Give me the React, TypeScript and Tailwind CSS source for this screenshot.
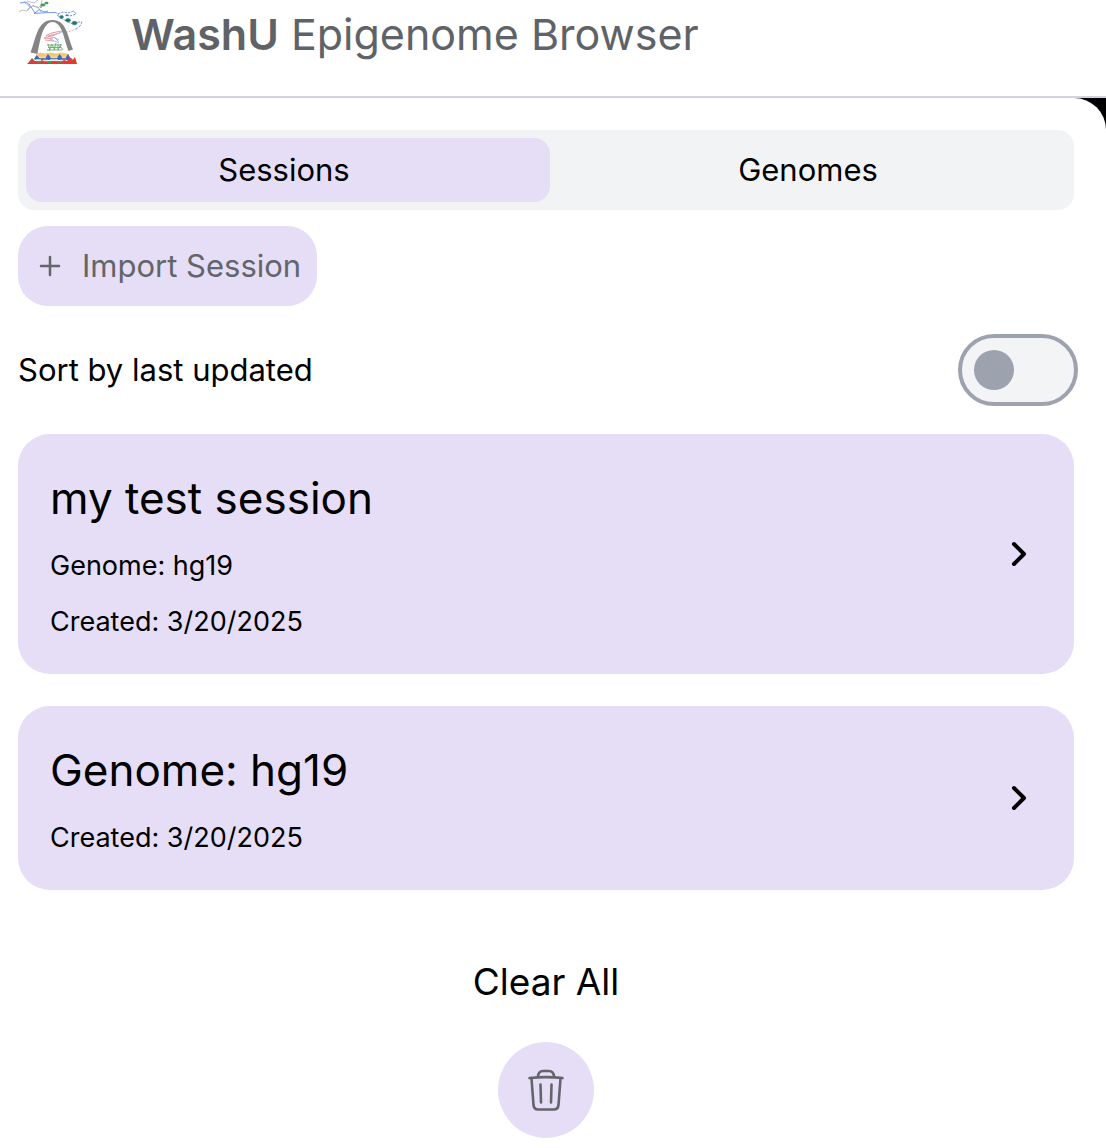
import { useState } from "react";

type Session = { title: string; details: string[] };

const sessions: Session[] = [
  { title: "my test session", details: ["Genome: hg19", "Created: 3/20/2025"] },
  { title: "Genome: hg19", details: ["Created: 3/20/2025"] },
];

const tabs = [
  { name: "Sessions", active: "-mr-2 bg-[#e5def6] pr-2" },
  { name: "Genomes", active: "-ml-2 bg-[#e5def6] pl-2" },
];

function Logo() {
  return (
    <svg className="h-16 w-16 shrink-0" viewBox="19 0 64 64" fill="none" aria-hidden="true">
      <g stroke="#a9afb6" strokeWidth="0.8">
        <path d="M19 12l3-2 5 1 5-5 6 1 3 5M24 2l6 5-3 3M27 1l7 2 4-3M32 5l6 3 3-3 1-5" />
      </g>
      <g stroke="#6f98ee" strokeWidth="1">
        <path d="M20 3l6-1 4 3M29 4l6 9 5-4M40 10l4 2 4-1M34 13.500q10-1 21-1" />
        <path d="M55 12l4 3M58 14l5-2 5 1 6-2 2 3-6 2-5-1" strokeDasharray="2.500 1" />
        <path d="M57 15l4 3 7 4 7 3 3-3 4 0-2 4-5 4" strokeDasharray="3 1" />
      </g>
      <g fill="#4b9c57">
        <ellipse cx="43" cy="5" rx="2.6" ry="1.4" />
        <ellipse cx="46.500" cy="3" rx="2" ry="1.2" />
        <ellipse cx="41" cy="7" rx="1.2" ry="0.800" />
      </g>
      <g fill="#217a48" stroke="#4781b0" strokeWidth="0.6">
        <ellipse cx="61.500" cy="17" rx="2" ry="1.400" />
        <ellipse cx="67" cy="15.300" rx="1.200" ry="0.600" />
        <ellipse cx="68" cy="20.200" rx="2.500" ry="1.800" />
        <ellipse cx="74.500" cy="23" rx="2.600" ry="1.800" />
      </g>
      <path d="M76 28.500q-4 3-12 4" stroke="#e9a0b4" strokeWidth="0.900" strokeDasharray="2 1" />
      <path d="M63 31q-12 1-17 5M60 33l-12 3M55 35l-11 3 9 1M45 40l9 1" stroke="#f09ba3" strokeWidth="1.200" />
      <path d="M62 32q-5 2-9 3M50 37q6 0 9 3M50 39l9 4M54 37l5 5" stroke="#a9b9f2" strokeWidth="1" />
      <path d="M30.500 52.500C36 39 37 20 52.500 20C66 20 67 34 73 49.500L68.500 51C63.500 37 62 22.500 52.500 22C43 22.500 40.500 38 37.500 54Z" fill="#858585" />
      <path d="M47 45h15M48 47.500h13M47 50h15M48 44l2 6M52 44l-3 7M52 45l3 5M56 43l-2 7M58 44v6M61 44l-3 6M60 46l3 4" stroke="#66ad66" strokeWidth="0.900" />
      <path d="M36 54l4-1.500 5 1 5-1 6 1 5-1 8 1.500-1 3H38z" fill="#f2c877" />
      <path d="M34 59l2.500-4 3 3h6l2.500-4 3 4h6l2.500-4 3 4h3l2.500-4 3 5-3 1H36z" fill="#3b66c4" />
      <path d="M40 57.500h6M51 57.500h6M62 57.500h4" stroke="#f5d798" strokeWidth="1.500" />
      <path d="M29 62l3-4 3 3h33l4-3 2 5-5 1H30z" fill="#469b49" />
      <path d="M36 60h5M43 60.500h5M50 60h8M60 60.500h6" stroke="#dcebdc" strokeWidth="1.400" />
      <path d="M27 64l5-5 3 3 4 0 3-2 3 2h6l3-1 3 1h4l3-2 3 1 3-4 2 4 3-4 2 7z" fill="#ea3535" />
      <path d="M37 62h4M48 62.500h4M57 62h4" stroke="#469b49" strokeWidth="1.200" />
    </svg>
  );
}

function TrashIcon() {
  return (
    <svg className="h-12 w-12" viewBox="0 0 48 48" fill="none" stroke="#62666a" strokeWidth="2.6" strokeLinecap="round" strokeLinejoin="round" aria-hidden="true">
      <path d="M7.500 12Q24 10.300 40.500 12" />
      <path d="M9.500 12.500l2 26.500q.500 4.500 4.800 4.500h15.400q4.300 0 4.800-4.500l2-26.500" />
      <path d="M16 10.500q.500-5.500 5-5.500h6q4.500 0 5 5.500" />
      <path d="M18.500 18.500l.500 18M29.500 18.500l-.500 18" />
    </svg>
  );
}

export default function App() {
  const [tab, setTab] = useState("Sessions");
  const [sorted, setSorted] = useState(false);

  return (
    <div className="bg-black font-['Inter',sans-serif] text-black">
      <header className="flex items-start gap-12 border-b-2 border-[#d1d5db] bg-white pb-7 pl-[19px]">
        <Logo />
        <h1 className="text-[43px] leading-[68px] text-[#5f6368]">
          <span className="font-semibold">WashU</span> Epigenome Browser
        </h1>
      </header>

      <main className="flex flex-col rounded-tr-[32px] bg-white pt-8 pr-8 pb-[10px] pl-[18px]">
        <div role="tablist" className="grid grid-cols-2 gap-2 rounded-2xl bg-[#f2f3f5] p-2">
          {tabs.map(({ name, active }) => (
            <button
              key={name}
              role="tab"
              aria-selected={tab === name}
              onClick={() => setTab(name)}
              className={`h-16 rounded-2xl text-[31px] leading-10 ${tab === name ? active : ""}`}
            >
              {name}
            </button>
          ))}
        </div>

        <button className="mt-4 flex h-20 items-center gap-5 self-start rounded-[30px] bg-[#e5def6] pr-4 pl-5 text-[31px] text-[#62666a]">
          <svg className="h-6 w-6" viewBox="0 0 24 24" stroke="currentColor" strokeWidth="2.5" strokeLinecap="round" aria-hidden="true">
            <path d="M3 12h18M12 3v18" />
          </svg>
          Import Session
        </button>

        <div className="mt-7 -mr-1 flex items-center justify-between">
          <label htmlFor="sort" className="text-[31px] leading-10">Sort by last updated</label>
          <input
            id="sort"
            type="checkbox"
            role="switch"
            checked={sorted}
            onChange={(e) => setSorted(e.target.checked)}
            className="flex h-[72px] w-[120px] appearance-none items-center rounded-full border-4 border-[#9ca3af] bg-[#f3f4f6] px-3 before:size-10 before:rounded-full before:bg-[#9ca3af] checked:justify-end"
          />
        </div>

        <div className="mt-7 flex flex-col gap-8">
          {sessions.map((s) => (
            <button key={s.title} className="flex items-center justify-between rounded-[32px] bg-[#e5def6] p-8 text-left">
              <span className="flex flex-col gap-4">
                <span className="text-[44px] leading-[64px]">{s.title}</span>
                {s.details.map((d) => (
                  <span key={d} className="text-[27px] leading-10">{d}</span>
                ))}
              </span>
              <svg className="mr-2 h-8 w-8" viewBox="0 0 32 32" fill="none" stroke="currentColor" strokeWidth="4" strokeLinecap="round" strokeLinejoin="round" aria-hidden="true">
                <path d="M12 6l10 10-10 10" />
              </svg>
            </button>
          ))}
        </div>

        <div className="mt-16 flex flex-col items-center gap-8">
          <h2 className="text-[37px] leading-[56px]">Clear All</h2>
          <button aria-label="Clear all" className="flex size-24 items-center justify-center rounded-full bg-[#e5def6]">
            <TrashIcon />
          </button>
        </div>
      </main>
    </div>
  );
}
